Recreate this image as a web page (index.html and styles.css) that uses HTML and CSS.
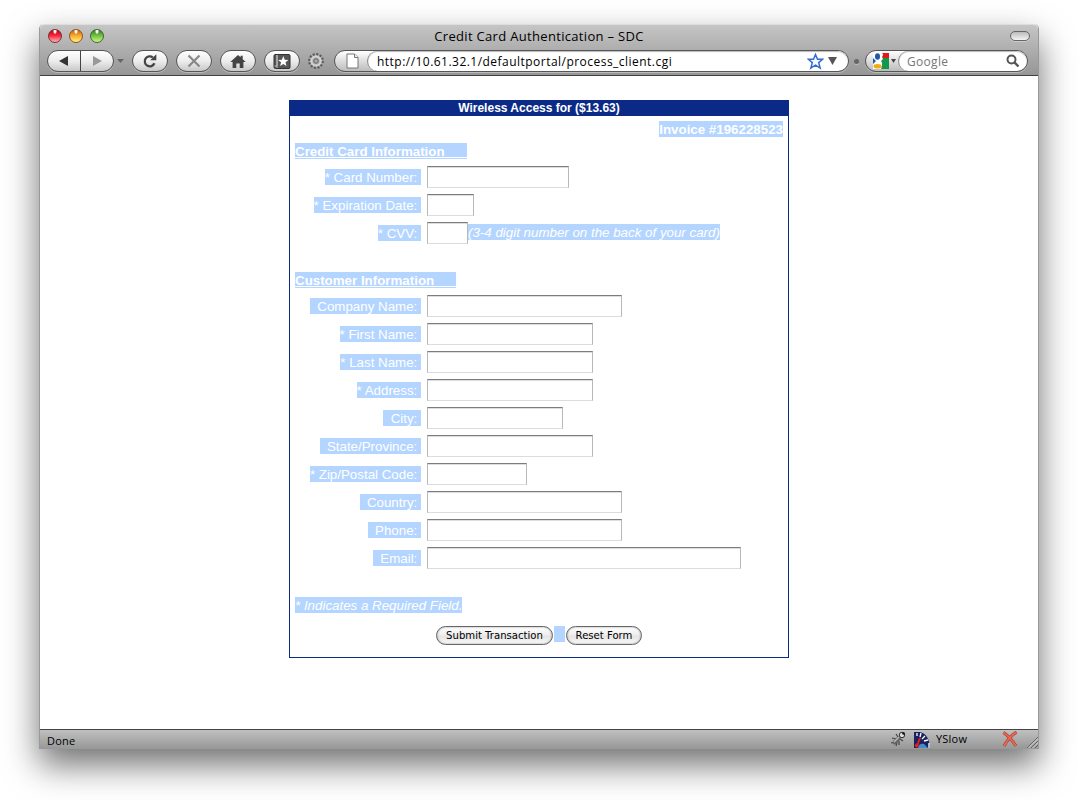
FILE: index.html
```html
<!DOCTYPE html>
<html lang="en">
<head>
<meta charset="utf-8">
<title>Credit Card Authentication – SDC</title>
<link rel="stylesheet" href="styles.css">
</head>
<body>
<div class="window">
  <header class="chrome">
    <div class="titlebar">
      <div class="lights"><i class="light red"></i><i class="light amber"></i><i class="light green"></i></div>
      <div class="title"><span>Credit Card Authentication – SDC</span></div>
      <i class="lozenge"></i>
    </div>
    <div class="toolbar">
      <div class="pill nav">
        <span class="half"><svg width="12" height="10"><path d="M1 5 10 0V10Z" fill="#333"/></svg></span>
        <span class="half last"><svg width="12" height="10"><path d="M11 5 2 0V10Z" fill="#999"/></svg></span>
      </div>
      <svg class="history" width="8" height="5"><path d="M0 0H7L3.5 4Z" fill="#666"/></svg>
      <div class="pill"><svg width="16" height="16" viewBox="0 0 16 16"><path d="M10.8 4.4A5 5 0 1 0 12.4 10.3" fill="none" stroke="#444" stroke-width="2.3"/><path d="M14.3 1.3V7.2H8.2Z" fill="#444"/></svg></div>
      <div class="pill"><svg width="14" height="14" viewBox="0 0 14 14"><path d="M1.5 1.5 12.5 12.5M12.5 1.5 1.5 12.5" stroke="#888" stroke-width="2.2"/></svg></div>
      <div class="pill"><svg width="16" height="15" viewBox="0 0 16 15"><path d="M8 1 0.3 8H2.6V14H6.3V9.5H9.7V14H13.4V8H15.7L12.7 5.2V1.8H10.6V3.3Z" fill="#444"/></svg></div>
      <div class="pill"><svg width="18" height="17" viewBox="0 0 18 17"><path d="M2 1.5H16Q17 1.5 17 3V14Q17 15.500 16 15.500H2.500Q1 15.500 1 14V3Q1 1.500 2 1.500Z" fill="#555" stroke="#333"/><path d="M1.500 13H4V2M4 2V15" fill="none" stroke="#bbb"/><path d="M10.3 3 11.7 6.800 15.500 7 12.500 9.300 13.500 13 10.300 10.900 7.100 13 8.100 9.300 5.100 7 8.900 6.800Z" fill="#fff"/></svg></div>
      <svg class="gear" width="16" height="16" viewBox="0 0 16 16"><circle cx="8" cy="8" r="6.600" fill="none" stroke="#5a5a5a" stroke-width="2.600" stroke-dasharray="2 1.456"/><circle cx="8" cy="8" r="4.700" fill="#aaa" stroke="#d2d2d2" stroke-width="2.200"/><circle cx="8" cy="8" r="2.200" fill="#aaa" stroke="#666"/></svg>
      <div class="field location">
        <span class="favicon"><svg width="13" height="16"><path d="M1 1H8.500L12 4.500V15H1Z" fill="#fff" stroke="#777"/><path d="M8.500 1V4.500H12" fill="#eee" stroke="#777"/></svg></span>
        <div class="entry">
          <span class="url">http://10.61.32.1/defaultportal/process_client.cgi</span>
          <svg width="17" height="17" viewBox="0 0 17 17"><path d="M8.500 1.500 10.500 6.200H15.700L11.700 9.600 13.200 15.200 8.500 12.200 3.800 15.200 5.300 9.600 1.300 6.200H6.500Z" fill="#f4f9ff" stroke="#356bd2" stroke-width="1.500"/></svg>
          <svg class="drop" width="9" height="8"><path d="M0 0H9L4.500 8Z" fill="#555"/></svg>
        </div>
      </div>
      <i class="dot"></i>
      <div class="field search">
        <span class="engine"><svg width="16" height="16" viewBox="0 0 16 16"><path fill="#2159a9" d="M0 0H8V16H0Z"/><path fill="#e11b1b" d="M8 0H16V6H8Z"/><path fill="#15974b" d="M8 5H16V16H8Z"/><path d="M0 0H9Q11 1 9 4 11 6 8 8 10 10 9 13L8 16H0V11L3 8 0 5Z" fill="#fff"/><ellipse cx="4.500" cy="3.500" rx="2.500" ry="3.200" fill="#2159a9"/><ellipse cx="4.500" cy="13.300" rx="4" ry="2.300" fill="#f0ab15"/><path d="M0 7H2V9H0Z" fill="#2159a9"/></svg><svg class="tiny" width="5" height="4"><path d="M0 0H5L2.500 4Z" fill="#444"/></svg></span>
        <div class="entry"><span class="hint">Google</span><svg width="14" height="14" viewBox="0 0 14 14"><circle cx="5.500" cy="5.500" r="4" fill="none" stroke="#555" stroke-width="2"/><path d="M8.500 8.500 12.500 12.500" stroke="#555" stroke-width="2.400"/></svg></div>
      </div>
    </div>
  </header>
  <main class="page">
    <form class="card">
      <h1 class="card-title">Wireless Access for ($13.63)</h1>
      <div class="card-body">
        <div class="invoice"><span class="hl">Invoice #196228523</span></div>
        <h2 class="section cc">Credit Card Information</h2>
        <div class="row"><label class="hl">* Card Number:&nbsp;</label><input class="w142"></div>
        <div class="row"><label class="hl">* Expiration Date:&nbsp;</label><input class="w47"></div>
        <div class="row"><label class="hl">* CVV:&nbsp;</label><input class="w41"><em class="hl note">(3-4 digit number on the back of your card)</em></div>
        <h2 class="section customer">Customer Information</h2>
        <div class="row"><label class="hl">&nbsp; Company Name:&nbsp;</label><input class="w195"></div>
        <div class="row"><label class="hl">* First Name:&nbsp;</label><input class="w166"></div>
        <div class="row"><label class="hl">* Last Name:&nbsp;</label><input class="w166"></div>
        <div class="row"><label class="hl">* Address:&nbsp;</label><input class="w166"></div>
        <div class="row"><label class="hl">&nbsp; City:&nbsp;</label><input class="w136"></div>
        <div class="row"><label class="hl">&nbsp; State/Province:&nbsp;</label><input class="w166"></div>
        <div class="row"><label class="hl">* Zip/Postal Code:&nbsp;</label><input class="w100"></div>
        <div class="row"><label class="hl">&nbsp; Country:&nbsp;</label><input class="w195"></div>
        <div class="row"><label class="hl">&nbsp; Phone:&nbsp;</label><input class="w195"></div>
        <div class="row"><label class="hl">&nbsp; Email:&nbsp;</label><input class="w314"></div>
        <div class="required"><em class="hl">* Indicates a Required Field.</em></div>
        <div class="actions"><button type="button" class="submit">Submit Transaction</button><span class="hl gap"></span><button type="button" class="reset">Reset Form</button></div>
      </div>
    </form>
  </main>
  <footer class="status">
    <span class="done">Done</span>
    <svg class="bug" width="16" height="16" viewBox="0 0 16 16"><path d="M2 7 6 8M6 3 8 6M1 12 5 11M6 15 7 11M9 14 9 10M13 10 10 8" stroke="#444" stroke-width="1.200"/><path d="M4.500 11.500 9 7" stroke="#666" stroke-width="4" stroke-linecap="round"/><path d="M4 11 9 6" stroke="#bbb" stroke-width="1.500"/><circle cx="12" cy="4" r="2.700" fill="#ddd" stroke="#333"/><circle cx="13.500" cy="2.500" r="1.300" fill="#111"/></svg>
    <svg class="gauge" width="16" height="16" viewBox="0 0 16 16"><path d="M0 0H6Q15 2 16 16H0Z" fill="#17245f"/><path d="M4 16Q5 11 10 12L14 16Z" fill="#4589c9"/><path d="M3 1V4M7 1 6 5M11 4 8 7M14 8 10 9M15 11V16" stroke="#fff" stroke-width="1.300"/><path d="M6 6 3 14" stroke="#f01818" stroke-width="2"/><circle cx="2.800" cy="13.500" r="2" fill="#f01818"/></svg>
    <span class="yslow">YSlow</span>
    <svg class="cross" width="16" height="16" viewBox="0 0 16 16"><path d="M1.500 1.500Q8 6 14 15M14.500 1Q7 6 2 15" fill="none" stroke="#9c3c30" stroke-width="3"/><path d="M1.500 1.500Q8 6 14 15M14.500 1Q7 6 2 15" fill="none" stroke="#ed6650" stroke-width="2"/></svg>
    <svg class="grip" width="12" height="12"><path d="M1 12 12 1M5 12 12 5M9 12 12 9" stroke="#666"/><path d="M2 12.500 12.500 2M6 12.500 12.500 6" stroke="#ddd" stroke-width=".8"/></svg>
  </footer>
</div>
</body>
</html>
```
FILE: styles.css
```css
* { box-sizing: border-box; }
body {
  margin: 0;
  height: 800px;
  overflow: hidden;
  background: #fff;
  padding: 24px 39px 0;
  font-family: "Open Sans", "Noto Sans", sans-serif;
  color: #000;
}
svg { display: block; flex: none; }
.window {
  width: 1000px;
  height: 725px;
  display: flex;
  flex-direction: column;
  border: 1px solid #999;
  border-top: 0;
  border-radius: 5px 5px 0 0;
  background: #fff;
  box-shadow: 0 16px 34px rgba(0, 0, 0, .56);
}
.chrome {
  height: 52px;
  flex: none;
  border-radius: 5px 5px 0 0;
  background: linear-gradient(#c5c5c5, #969696);
  border-top: 1px solid #ddd;
  border-bottom: 1px solid #404040;
}
.titlebar { height: 25px; display: flex; align-items: center; padding: 0 8px; }
.lights { display: flex; gap: 7px; width: 70px; padding-bottom: 3px; }
.light { width: 14px; height: 14px; border-radius: 50%; border: 1px solid #7a3030; }
.red { background: radial-gradient(ellipse at 50% 5%, #fff 0 12%, transparent 25%), linear-gradient(#b90712, #f5243a 45%, #ffb4b4); }
.amber { background: radial-gradient(ellipse at 50% 5%, #fff 0 12%, transparent 25%), linear-gradient(#c45e10, #f8a72a 45%, #fff48a); border-color: #955114; }
.green { background: radial-gradient(ellipse at 50% 5%, #fff 0 12%, transparent 25%), linear-gradient(#357b20, #70bd43 45%, #ccf688); border-color: #386d2a; }
.title { flex: 1; text-align: center; font-size: 13px; line-height: 18px; padding-bottom: 4px; letter-spacing: .32px; white-space: nowrap; margin-right: 50px; }
.lozenge { width: 20px; height: 10px; margin-bottom: 3px; border: 1px solid #666; border-radius: 5px; background: linear-gradient(#bbb, #f4f4f4); box-shadow: 0 1px #ccc; }
.toolbar { display: flex; align-items: center; height: 22px; padding-left: 7px; }
.pill {
  width: 36px;
  height: 22px;
  flex: none;
  margin-right: 8px;
  display: flex;
  align-items: center;
  justify-content: center;
  border: 1px solid #555;
  border-radius: 11px;
  background: linear-gradient(#fff, #ededed 50%, #c8c8c8);
  box-shadow: 0 1px #bbb;
}
.nav { width: 67px; margin-right: 3px; }
.half { flex: 1; height: 100%; display: flex; align-items: center; justify-content: center; }
.half.last { border-left: 1px solid #444; }
.history { margin-right: 7px; }
.gear { margin-right: 10px; }
.field {
  height: 22px;
  flex: none;
  display: flex;
  overflow: hidden;
  border: 1px solid #555;
  border-radius: 11px;
  background: linear-gradient(#fff, #bcbcbc);
  box-shadow: 0 1px #bbb;
}
.location { width: 515px; }
.favicon { width: 32px; display: flex; align-items: center; padding-left: 11px; }
.entry {
  flex: 1;
  display: flex;
  align-items: center;
  background: #fff;
  border-left: 1px solid #888;
  border-radius: 10px;
  box-shadow: inset 0 1px 1px #bbb;
}
.location .entry { padding: 0 11px 0 9px; }
.url { flex: 1; font-size: 12px; line-height: 18px; padding-top: 1px; letter-spacing: .47px; white-space: nowrap; }
.drop { margin-left: 4px; }
.dot { width: 5px; height: 5px; border-radius: 50%; background: #666; margin: 0 6px 0 5px; box-shadow: 0 1px #bbb; }
.search { width: 163px; }
.engine { width: 32px; display: flex; align-items: center; padding-left: 7px; gap: 2px; }
.search .entry { padding: 0 7px 0 8px; }
.hint { flex: 1; font-size: 12px; line-height: 18px; padding-top: 1px; letter-spacing: .3px; color: #777; }

.page { flex: 1; padding: 24px 0 0 249px; }
.card {
  width: 500px;
  height: 558px;
  border: 1px solid #0b2a87;
  border-top: 0;
  font: 13.33px/16px "Liberation Sans", Arial, sans-serif;
  color: #fff;
}
.card-title { margin: 0; height: 16px; background: #0b2a87; font-size: 12px; line-height: 16px; text-align: center; }
.card-body { padding: 5px 5px 0; }
.hl { background: #b4d5ff; white-space: pre; height: 16px; line-height: 18px; display: block; }
.invoice { display: flex; justify-content: flex-end; font-weight: bold; }
.section {
  margin: 6px 0 7px;
  height: 16px;
  width: 172px;
  font-size: 13.33px;
  line-height: 18px;
  background: linear-gradient(#b4d5ff 14px, #fff 14px 15px, #b4d5ff 15px);
  white-space: nowrap;
}
.customer { width: 161px; margin-top: 28px; }
.row { display: grid; grid-template-columns: 126px auto 1fr; height: 22px; margin-bottom: 6px; }
.row label { justify-self: end; margin: 3px 0 0; }
.row input {
  margin-left: 6px;
  height: 22px;
  padding: 0;
  border: 1px solid;
  border-color: #7c7c7c #b8b8b8 #dcdcdc #b8b8b8;
  border-radius: 0;
  background: #fff;
  box-shadow: inset 0 1px #dedede;
  outline: 0;
}
.note { justify-self: start; margin-top: 2px; }
.w41 { width: 41px; }
.w47 { width: 47px; }
.w100 { width: 100px; }
.w136 { width: 136px; }
.w142 { width: 142px; }
.w166 { width: 166px; }
.w195 { width: 195px; }
.w314 { width: 314px; }
.required { display: flex; margin-top: 28px; }
.actions { display: flex; align-items: flex-start; margin-top: 13px; padding-left: 141px; }
.actions button {
  height: 19px;
  padding: 0;
  border: 1px solid #666;
  border-radius: 10px;
  background: linear-gradient(#fff, #eee 45%, #e4e4e4 55%, #fafafa);
  font: 10.1px/16px "DejaVu Sans", sans-serif;
  color: #000;
  white-space: nowrap;
  box-shadow: inset 0 0 2px #888;
}
.submit { width: 117px; }
.reset { width: 76px; }
.gap { width: 11px; margin: 0 1px; }

.status {
  height: 19px;
  flex: none;
  display: flex;
  align-items: center;
  padding-left: 7px;
  border-top: 1px solid #444;
  background: linear-gradient(#c0c0c0, #999);
  font-size: 11px;
  line-height: 16px;
}
.done { flex: 1; padding-top: 3px; letter-spacing: .2px; }
.gauge { margin: 1px 6px 0 8px; }
.yslow { width: 66px; letter-spacing: .2px; }
.grip { margin: 5px 0 0 8px; }
```
